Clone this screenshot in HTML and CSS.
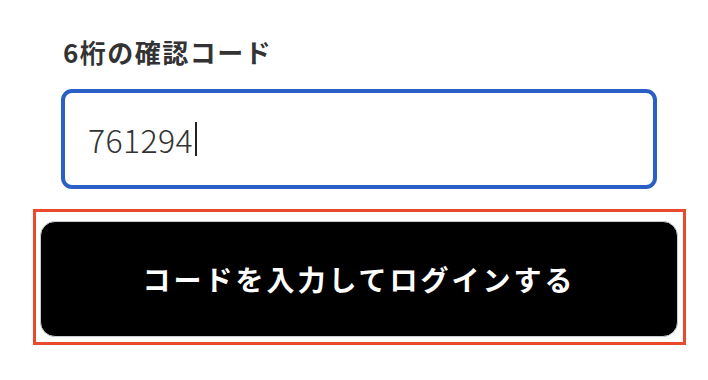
FILE: index.html
```html
<!DOCTYPE html>
<html lang="ja">
<head>
    <meta charset="UTF-8">
    <meta name="viewport" content="width=device-width, initial-scale=1.0">
    <title>確認コードでログイン</title>
    <link rel="stylesheet" href="styles.css">
</head>
<body>

    <div class="verify-form">
        <label class="code-label" for="codeInput">6桁の確認コード</label>
        <div class="code-input" id="codeInput">
            <span class="code-value">761294</span><span class="caret"></span>
        </div>

        <!-- highlighted submit area -->
        <div class="submit-highlight">
            <button class="submit-button" type="submit">コードを入力してログインする</button>
        </div>
    </div>

</body>
</html>
```

FILE: styles.css
```css
body {
    margin: 0;
    background-color: #fff;
    font-family: "Noto Sans CJK JP", "Noto Sans", sans-serif;
}

.verify-form {
    padding: 39px 0 0 33px;
}

.code-label {
    display: block;
    margin-left: 30px;
    font-size: 26px;
    line-height: 26px;
    font-weight: 700;
    color: #333;
    letter-spacing: 1.5px;
}

.code-input {
    display: flex;
    align-items: center;
    box-sizing: border-box;
    width: 596px;
    height: 100px;
    margin: 24px 0 0 28px;
    padding: 0 23px;
    border: 4px solid #2a5fc6;
    border-radius: 11px;
    font-size: 32px;
    font-weight: 300;
    color: #333;
}

.code-value {
    line-height: 1;
    letter-spacing: 0.4px;
}

.caret {
    display: inline-block;
    width: 2px;
    height: 34px;
    margin-left: 2px;
    background-color: #222;
}

.submit-highlight {
    box-sizing: border-box;
    width: 653px;
    height: 136px;
    margin-top: 20px;
    padding: 9px 5px 5px 4px;
    border: 3px solid #ea4a2c;
}

.submit-button {
    display: block;
    width: 100%;
    height: 100%;
    border: 1px solid #c9ccd2;
    border-radius: 15px;
    background-color: #000;
    color: #fff;
    font-family: inherit;
    font-size: 28px;
    font-weight: 700;
    letter-spacing: 3px;
    cursor: pointer;
}
```
